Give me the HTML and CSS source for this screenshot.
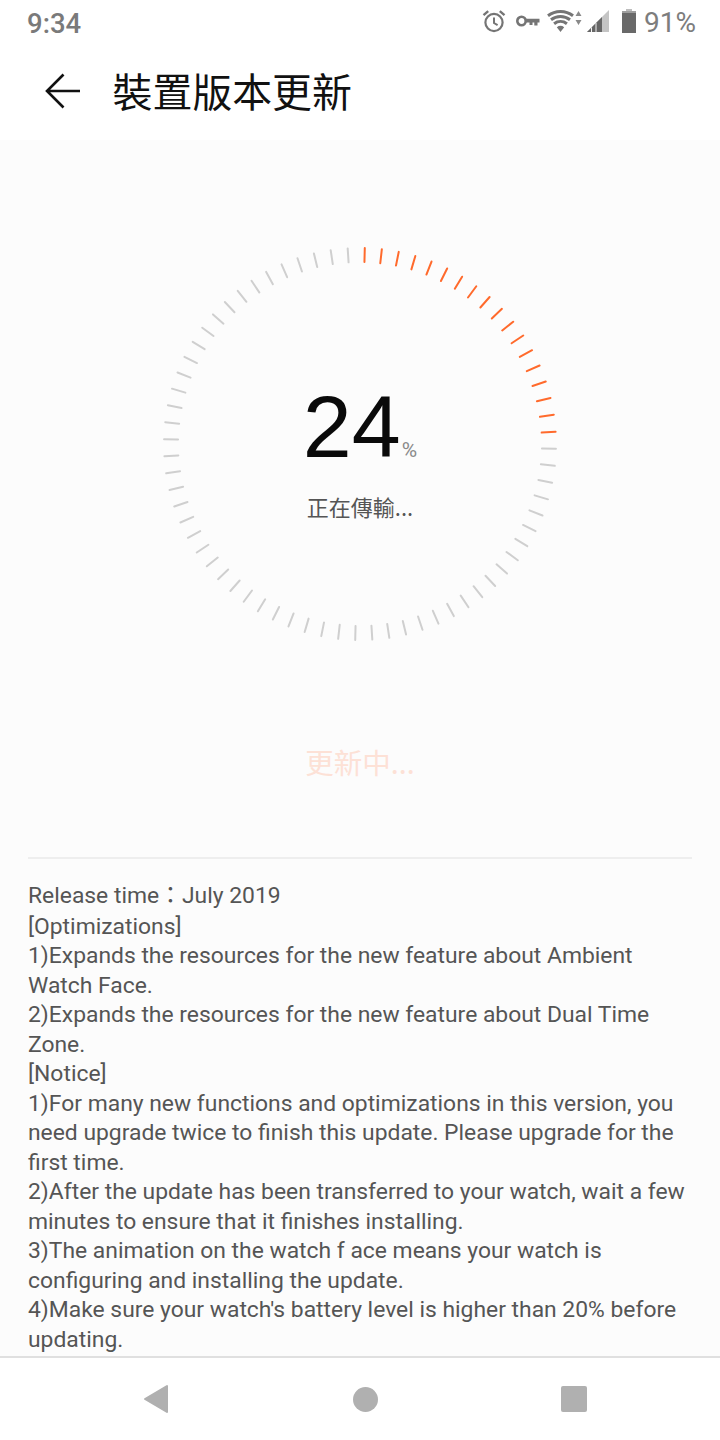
FILE: index.html
```html
<!DOCTYPE html>
<html lang="zh-Hant">
<head>
<meta charset="utf-8">
<title>裝置版本更新</title>
<link rel="stylesheet" href="styles.css">
</head>
<body>
<div class="phone">
  <header class="top">
    <div class="status">
      <span class="time">9:34</span>
      <div class="status-right">
        <svg class="ic-alarm" viewBox="0 0 24 24" width="24" height="24"><circle cx="12" cy="13.5" r="8.6" fill="none" stroke="#757575" stroke-width="2.2"/><path d="M12 8.500v5.500l3.600 2.200" fill="none" stroke="#757575" stroke-width="2"/><path d="M1.500 6.200 6.200 2.200M22.500 6.200 17.800 2.200" stroke="#757575" stroke-width="2.400" fill="none"/></svg>
        <svg class="ic-key" viewBox="0 0 24 12" width="24" height="12"><circle cx="5.500" cy="6" r="4.200" fill="none" stroke="#757575" stroke-width="2.600"/><path d="M9 3.800h14.500v3.800h-2v3h-3.200v-3h-1.800v2.400h-3V7.600H9z" fill="#757575"/></svg>
        <svg class="ic-wifi" viewBox="0 0 36 24" width="36" height="24"><g fill="none" stroke="#757575" stroke-width="3"><path d="M1 6.800A20.500 20.500 0 0 1 26 6.800"/><path d="M4 10.750A15.500 15.500 0 0 1 23 10.750"/><path d="M7.100 14.700A10.500 10.500 0 0 1 19.900 14.700"/></g><path d="M9.800 18.300A6 6 0 0 1 17.200 18.300L13.500 23z" fill="#757575"/><path d="M31.500 2 34.500 7h-6zM31.500 16l-3-5h6z" fill="#8a8a8a"/></svg>
        <svg class="ic-signal" viewBox="0 0 22 22" width="22" height="22"><path d="M0 22 22 0v22z" fill="#c4c4c4"/><path d="M0 22 15 7v15z" fill="#666"/><path d="M4.500 22V17.500M9 22V13" stroke="#f4f4f4" stroke-width="1" fill="none"/></svg>
        <svg class="ic-batt" viewBox="0 0 14 24" width="14" height="24"><path d="M4 0h6v2H4z" fill="#bdbdbd"/><path d="M0 2h14v2H0z" fill="#9e9e9e"/><path d="M0 4h14v20H0z" fill="#696969"/></svg>
        <span class="pct">91%</span>
      </div>
    </div>
    <div class="titlebar">
      <svg class="back" viewBox="0 0 36 36" width="36" height="36"><path d="M35 18H2M18.500 1.500 2 18l16.500 16.500" fill="none" stroke="#111" stroke-width="2.600"/></svg>
      <h1 class="title">裝置版本更新</h1>
    </div>
  </header>

  <main class="content">
    <section class="dial">
      <svg class="ticks" viewBox="0 0 400 400" width="400" height="400">
        <g class="tick-on">
          <line x1="200" y1="4" x2="200" y2="18" transform="rotate(1.4 200 200)"/>
          <line x1="200" y1="4" x2="200" y2="18" transform="rotate(6.4 200 200)"/>
          <line x1="200" y1="4" x2="200" y2="18" transform="rotate(11.4 200 200)"/>
          <line x1="200" y1="4" x2="200" y2="18" transform="rotate(16.4 200 200)"/>
          <line x1="200" y1="4" x2="200" y2="18" transform="rotate(21.4 200 200)"/>
          <line x1="200" y1="4" x2="200" y2="18" transform="rotate(26.4 200 200)"/>
          <line x1="200" y1="4" x2="200" y2="18" transform="rotate(31.4 200 200)"/>
          <line x1="200" y1="4" x2="200" y2="18" transform="rotate(36.4 200 200)"/>
          <line x1="200" y1="4" x2="200" y2="18" transform="rotate(41.4 200 200)"/>
          <line x1="200" y1="4" x2="200" y2="18" transform="rotate(46.4 200 200)"/>
          <line x1="200" y1="4" x2="200" y2="18" transform="rotate(51.4 200 200)"/>
          <line x1="200" y1="4" x2="200" y2="18" transform="rotate(56.4 200 200)"/>
          <line x1="200" y1="4" x2="200" y2="18" transform="rotate(61.4 200 200)"/>
          <line x1="200" y1="4" x2="200" y2="18" transform="rotate(66.4 200 200)"/>
          <line x1="200" y1="4" x2="200" y2="18" transform="rotate(71.4 200 200)"/>
          <line x1="200" y1="4" x2="200" y2="18" transform="rotate(76.4 200 200)"/>
          <line x1="200" y1="4" x2="200" y2="18" transform="rotate(81.4 200 200)"/>
          <line x1="200" y1="4" x2="200" y2="18" transform="rotate(86.4 200 200)"/>
        </g>
        <g class="tick-off">
          <line x1="200" y1="4" x2="200" y2="18" transform="rotate(91.4 200 200)"/>
          <line x1="200" y1="4" x2="200" y2="18" transform="rotate(96.4 200 200)"/>
          <line x1="200" y1="4" x2="200" y2="18" transform="rotate(101.4 200 200)"/>
          <line x1="200" y1="4" x2="200" y2="18" transform="rotate(106.4 200 200)"/>
          <line x1="200" y1="4" x2="200" y2="18" transform="rotate(111.4 200 200)"/>
          <line x1="200" y1="4" x2="200" y2="18" transform="rotate(116.4 200 200)"/>
          <line x1="200" y1="4" x2="200" y2="18" transform="rotate(121.4 200 200)"/>
          <line x1="200" y1="4" x2="200" y2="18" transform="rotate(126.4 200 200)"/>
          <line x1="200" y1="4" x2="200" y2="18" transform="rotate(131.4 200 200)"/>
          <line x1="200" y1="4" x2="200" y2="18" transform="rotate(136.4 200 200)"/>
          <line x1="200" y1="4" x2="200" y2="18" transform="rotate(141.4 200 200)"/>
          <line x1="200" y1="4" x2="200" y2="18" transform="rotate(146.4 200 200)"/>
          <line x1="200" y1="4" x2="200" y2="18" transform="rotate(151.4 200 200)"/>
          <line x1="200" y1="4" x2="200" y2="18" transform="rotate(156.4 200 200)"/>
          <line x1="200" y1="4" x2="200" y2="18" transform="rotate(161.4 200 200)"/>
          <line x1="200" y1="4" x2="200" y2="18" transform="rotate(166.4 200 200)"/>
          <line x1="200" y1="4" x2="200" y2="18" transform="rotate(171.4 200 200)"/>
          <line x1="200" y1="4" x2="200" y2="18" transform="rotate(176.4 200 200)"/>
          <line x1="200" y1="4" x2="200" y2="18" transform="rotate(181.4 200 200)"/>
          <line x1="200" y1="4" x2="200" y2="18" transform="rotate(186.4 200 200)"/>
          <line x1="200" y1="4" x2="200" y2="18" transform="rotate(191.4 200 200)"/>
          <line x1="200" y1="4" x2="200" y2="18" transform="rotate(196.4 200 200)"/>
          <line x1="200" y1="4" x2="200" y2="18" transform="rotate(201.4 200 200)"/>
          <line x1="200" y1="4" x2="200" y2="18" transform="rotate(206.4 200 200)"/>
          <line x1="200" y1="4" x2="200" y2="18" transform="rotate(211.4 200 200)"/>
          <line x1="200" y1="4" x2="200" y2="18" transform="rotate(216.4 200 200)"/>
          <line x1="200" y1="4" x2="200" y2="18" transform="rotate(221.4 200 200)"/>
          <line x1="200" y1="4" x2="200" y2="18" transform="rotate(226.4 200 200)"/>
          <line x1="200" y1="4" x2="200" y2="18" transform="rotate(231.4 200 200)"/>
          <line x1="200" y1="4" x2="200" y2="18" transform="rotate(236.4 200 200)"/>
          <line x1="200" y1="4" x2="200" y2="18" transform="rotate(241.4 200 200)"/>
          <line x1="200" y1="4" x2="200" y2="18" transform="rotate(246.4 200 200)"/>
          <line x1="200" y1="4" x2="200" y2="18" transform="rotate(251.4 200 200)"/>
          <line x1="200" y1="4" x2="200" y2="18" transform="rotate(256.4 200 200)"/>
          <line x1="200" y1="4" x2="200" y2="18" transform="rotate(261.4 200 200)"/>
          <line x1="200" y1="4" x2="200" y2="18" transform="rotate(266.4 200 200)"/>
          <line x1="200" y1="4" x2="200" y2="18" transform="rotate(271.4 200 200)"/>
          <line x1="200" y1="4" x2="200" y2="18" transform="rotate(276.4 200 200)"/>
          <line x1="200" y1="4" x2="200" y2="18" transform="rotate(281.4 200 200)"/>
          <line x1="200" y1="4" x2="200" y2="18" transform="rotate(286.4 200 200)"/>
          <line x1="200" y1="4" x2="200" y2="18" transform="rotate(291.4 200 200)"/>
          <line x1="200" y1="4" x2="200" y2="18" transform="rotate(296.4 200 200)"/>
          <line x1="200" y1="4" x2="200" y2="18" transform="rotate(301.4 200 200)"/>
          <line x1="200" y1="4" x2="200" y2="18" transform="rotate(306.4 200 200)"/>
          <line x1="200" y1="4" x2="200" y2="18" transform="rotate(311.4 200 200)"/>
          <line x1="200" y1="4" x2="200" y2="18" transform="rotate(316.4 200 200)"/>
          <line x1="200" y1="4" x2="200" y2="18" transform="rotate(321.4 200 200)"/>
          <line x1="200" y1="4" x2="200" y2="18" transform="rotate(326.4 200 200)"/>
          <line x1="200" y1="4" x2="200" y2="18" transform="rotate(331.4 200 200)"/>
          <line x1="200" y1="4" x2="200" y2="18" transform="rotate(336.4 200 200)"/>
          <line x1="200" y1="4" x2="200" y2="18" transform="rotate(341.4 200 200)"/>
          <line x1="200" y1="4" x2="200" y2="18" transform="rotate(346.4 200 200)"/>
          <line x1="200" y1="4" x2="200" y2="18" transform="rotate(351.4 200 200)"/>
          <line x1="200" y1="4" x2="200" y2="18" transform="rotate(356.4 200 200)"/>
        </g>
      </svg>
      <div class="readout">
        <div class="percent"><span class="num">24</span><span class="sign">%</span></div>
        <div class="state">正在傳輸...</div>
      </div>
    </section>
    <div class="updating">更新中...</div>
    <hr class="rule">
    <div class="notes">
      <div class="first">Release time：July 2019</div>
      <div>[Optimizations]</div>
      <div>1)Expands the resources for the new feature about Ambient Watch Face.</div>
      <div>2)Expands the resources for the new feature about Dual Time Zone.</div>
      <div>[Notice]</div>
      <div>1)For many new functions and optimizations in this version, you need upgrade twice to finish this update. Please upgrade for the first time.</div>
      <div>2)After the update has been transferred to your watch, wait a few minutes to ensure that it finishes installing.</div>
      <div>3)The animation on the watch f ace means your watch is configuring and installing the update.</div>
      <div>4)Make sure your watch's battery level is higher than 20% before updating.</div>
    </div>
  </main>

  <nav class="navbar">
    <svg viewBox="0 0 26 30" width="26" height="30"><path d="M24 2v26L2 15z" fill="#b0b0b0" stroke="#b0b0b0" stroke-width="2" stroke-linejoin="round"/></svg>
    <span class="nav-circle"></span>
    <span class="nav-square"></span>
  </nav>
</div>
</body>
</html>
```

FILE: styles.css
```css
* { box-sizing: border-box; }
html, body { margin: 0; padding: 0; background: #fff; }
body { font-family: Roboto, "Noto Sans CJK TC", sans-serif; }
.phone { width: 720px; height: 1440px; display: flex; flex-direction: column; overflow: hidden; }

.top { height: 140px; background: #fff; flex: none; }
.status { height: 46px; display: flex; justify-content: space-between; align-items: center; padding: 0 24px 0 27px; color: #757575; }
.time { font-size: 27.5px; font-weight: 500; color: #7a7a7a; }
.status-right { display: flex; align-items: center; padding-bottom: 4px; }
.status-right svg { display: block; flex: none; }
.ic-alarm { margin-right: 10px; }
.ic-key { margin-right: 7px; }
.ic-wifi { margin-right: 4px; }
.ic-signal { margin-right: 13px; }
.ic-batt { margin-right: 8px; }
.pct { font-size: 28px; line-height: 32px; color: #7d7d7d; margin-top: 4px; }

.titlebar { height: 94px; display: flex; align-items: center; padding: 0 0 7px 45px; }
.back { flex: none; margin-right: 32px; margin-top: 2px; }
.title { margin: 0 0 0 -0.5px; font-size: 39.9px; font-weight: 400; color: #111; font-family: "Noto Sans CJK TC", sans-serif; line-height: 56px; }

.content { flex: 1; min-height: 0; background: #fcfcfc; overflow: hidden; padding-top: 104px; display: flex; flex-direction: column; }
.dial { width: 400px; height: 400px; margin: 0 auto; position: relative; flex: none; }
.ticks { display: block; }
.tick-on line { stroke: #ff6a2c; stroke-width: 2; stroke-linecap: round; }
.tick-off line { stroke: #cfcfcf; stroke-width: 2; stroke-linecap: round; }
.readout { position: absolute; left: 0; right: 0; top: 131px; display: flex; flex-direction: column; align-items: center; }
.percent { display: flex; align-items: baseline; height: 104px; }
.num { font-family: "Liberation Sans", sans-serif; font-size: 88px; line-height: 104px; color: #0a0a0a; }
.sign { font-size: 21px; color: #8a8a8a; margin-left: 1px; }
.state { font-size: 22px; line-height: 30px; color: #555; font-family: "Noto Sans CJK TC", sans-serif; margin-top: 12px; }

.updating { flex: none; text-align: center; font-size: 28.5px; line-height: 40px; color: #fde1d6; font-family: "Noto Sans CJK TC", sans-serif; margin-top: 98px; }
.rule { flex: none; border: 0; height: 2px; background: #eeeeee; margin: 75px 28px 0; }

.notes { padding: 0 28px; margin-top: 19.5px; font-size: 22.87px; line-height: 29.5px; color: #555; font-family: Roboto, "Noto Sans CJK TC", sans-serif; }
.first { line-height: 33px; }

.navbar { flex: none; height: 84px; background: #fff; border-top: 2px solid #e0e0e0; display: flex; align-items: center; padding: 0 133px 0 143px; justify-content: space-between; }
.nav-circle { width: 25px; height: 25px; border-radius: 50%; background: #b0b0b0; }
.nav-square { width: 26px; height: 26px; border-radius: 2px; background: #b0b0b0; }
```
